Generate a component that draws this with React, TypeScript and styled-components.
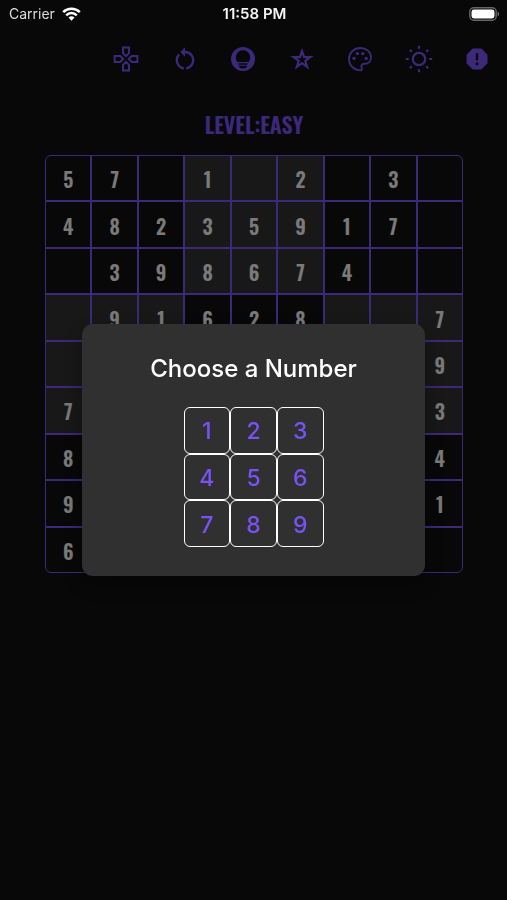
import React from "react";
import styled, { createGlobalStyle } from "styled-components";
import { MdRestartAlt, MdReport } from "react-icons/md";

const accent = "#7852f4";

const GlobalStyle = createGlobalStyle`
  *, *::before, *::after { box-sizing: border-box; }
  html { background: #101010; }
  body {
    margin: 0;
    font-family: Inter, "Liberation Sans", sans-serif;
    color: #fff;
  }
  button { margin: 0; padding: 0; border: 0; background: none; font: inherit; color: inherit; cursor: pointer; }
`;

const Screen = styled.div`
  min-height: 100vh;
  display: flex;
  flex-direction: column;
  background: #101010;
`;

const StatusBar = styled.header`
  position: relative;
  z-index: 3;
  display: grid;
  grid-template-columns: 1fr auto 1fr;
  align-items: center;
  height: 28px;
  padding: 0 7px 0 9px;
  font-size: 14px;
  line-height: 20px;
`;

const Carrier = styled.span`
  display: flex;
  align-items: center;
  gap: 7px;
  color: #dcdcdc;
`;

const Clock = styled.time`
  font-size: 15px;
  font-weight: 600;
  color: #f4f4f4;
`;

const Battery = styled.svg`
  justify-self: end;
  display: block;
`;

const Toolbar = styled.nav`
  display: flex;
  justify-content: space-between;
  padding: 17px 16px 0 112px;
`;

const Tool = styled.button`
  display: grid;
  place-items: center;
  width: 28px;
  height: 28px;
  color: ${accent};

  svg { display: block; }
`;

const Game = styled.main`
  display: flex;
  flex-direction: column;
  gap: 16px;
  padding: 36px 44px 0 45px;
`;

const Level = styled.h1`
  margin: 0;
  text-align: center;
  font-family: Oswald, "Liberation Sans Narrow", "Liberation Sans", sans-serif;
  font-size: 22px;
  line-height: 30px;
  font-weight: 600;
  color: ${accent};
`;

const Board = styled.div`
  display: grid;
  grid-template-columns: repeat(9, 1fr);

  & > :nth-child(1) { border-top-left-radius: 6px; }
  & > :nth-child(9) { border-top-right-radius: 6px; }
  & > :nth-child(73) { border-bottom-left-radius: 6px; }
  & > :nth-child(81) { border-bottom-right-radius: 6px; }
`;

const Cell = styled.button<{ $tinted: boolean }>`
  aspect-ratio: 1;
  min-width: 0;
  display: grid;
  place-items: center;
  padding-top: 2px;
  border: 1px solid ${accent};
  background: ${(p) => (p.$tinted ? "#303030" : "#101010")};
  font-family: Oswald, "Liberation Sans Narrow", "Liberation Sans", sans-serif;
  font-size: 20px;
  line-height: 28px;
  font-weight: 600;
  color: #f4f4f4;
`;

const Backdrop = styled.div`
  position: fixed;
  inset: 0;
  z-index: 2;
  display: grid;
  place-items: center;
  background: rgba(0, 0, 0, 0.5);
`;

const Dialog = styled.section`
  width: 67.5%;
  display: flex;
  flex-direction: column;
  align-items: center;
  gap: 22px;
  padding: 29px 20px;
  border-radius: 11px;
  background: #303030;
  box-shadow: 0 8px 20px rgba(0, 0, 0, 0.35);
`;

const DialogTitle = styled.h2`
  margin: 0;
  font-size: 24px;
  line-height: 32px;
  font-weight: 500;
  text-align: center;
`;

const Picker = styled.div`
  display: grid;
  grid-template-columns: repeat(3, 1fr);
  width: 140px;
`;

const PickerKey = styled.button`
  aspect-ratio: 1;
  display: grid;
  place-items: center;
  padding-top: 2px;
  border: 1px solid #fff;
  border-radius: 6px;
  font-size: 23px;
  line-height: 28px;
  font-weight: 500;
  color: ${accent};
`;

const GamepadIcon = () => (
  <svg width="26" height="26" viewBox="0 0 26 26" fill="none" stroke="currentColor" strokeWidth="2" aria-hidden="true">
    <path d="M10 1.600h6v5.600l-3 3-3-3zM10 24.400h6v-5.600l-3-3-3 3zM1.600 10v6h5.600l3-3-3-3zM24.400 10v6h-5.600l-3-3 3-3z" />
  </svg>
);

const BulbIcon = () => (
  <svg width="26" height="26" viewBox="0 0 26 26" aria-hidden="true">
    <path
      fill="currentColor"
      fillRule="evenodd"
      d="M13 1a12 12 0 1 0 0 24a12 12 0 0 0 0-24zM13 4.200a7.200 7.200 0 0 1 4.600 12.700L17.200 20a4.300 3.200 0 0 1-8.400 0l-.4-3.100A7.200 7.200 0 0 1 13 4.200z"
    />
    <path d="M8 16.600h10M8.500 19.200h9" stroke="currentColor" strokeWidth="1.1" />
  </svg>
);

const StarIcon = () => (
  <svg width="26" height="26" viewBox="0 0 26 26" fill="none" stroke="currentColor" strokeWidth="2.2" aria-hidden="true">
    <path d="M13 5.200l2.100 5.900h6.200l-5 3.700 1.900 6.200-5.200-3.800L7.800 21l1.900-6.200-5-3.700h6.200z" />
  </svg>
);

const PaletteIcon = () => (
  <svg width="26" height="26" viewBox="0 0 26 26" fill="none" stroke="currentColor" strokeWidth="1.9" aria-hidden="true">
    <path d="M14.600 24.200C7.400 24.800 2 19.600 2 13 2 6.700 7 2 13.200 2 19.400 2 24 6 24 11.200c0 4-2.700 6.600-6 6.600-2.200 0-3.600.5-3.600 2.300 0 1.700 1.200 2.400.2 4.100z" />
    <g fill="currentColor" stroke="none">
      <circle cx="7" cy="12.4" r="1.7" />
      <circle cx="10.4" cy="7.6" r="1.7" />
      <circle cx="15.8" cy="7.6" r="1.7" />
      <circle cx="19.2" cy="12.4" r="1.7" />
    </g>
  </svg>
);

const SunIcon = () => (
  <svg width="28" height="28" viewBox="0 0 28 28" fill="none" stroke="currentColor" strokeWidth="2.2" aria-hidden="true">
    <circle cx="14" cy="14" r="6.2" />
    <path d="M14 .8v3M14 24.2v3M.8 14h3M24.2 14h3M4.9 4.9l1.9 1.9M21.2 21.2l1.9 1.9M4.9 23.1l1.9-1.9M21.2 6.8l1.9-1.9" />
  </svg>
);

const WifiIcon = () => (
  <svg width="19" height="14" viewBox="0 0 19 14" fill="none" stroke="#fff" strokeWidth="2.5" aria-hidden="true">
    <path d="M1.2 5.2a11.8 11.8 0 0 1 16.6 0M4.2 8.3a7.5 7.5 0 0 1 10.6 0" />
    <path d="M9.5 13.8l-3-3.2a4.3 4.3 0 0 1 6 0z" fill="#fff" stroke="none" />
  </svg>
);

const tools = [
  { label: "Controls", icon: <GamepadIcon /> },
  { label: "Restart", icon: <MdRestartAlt size={28} /> },
  { label: "Hint", icon: <BulbIcon /> },
  { label: "Favourites", icon: <StarIcon /> },
  { label: "Theme", icon: <PaletteIcon /> },
  { label: "Brightness", icon: <SunIcon /> },
  { label: "Report", icon: <MdReport size={28} /> },
];

const rows = [
  "57.1.2.3.",
  "48235917.",
  ".398674..",
  ".91628..7",
  "........9",
  "7.......3",
  "8.......4",
  "9.......1",
  "6........",
];

const isTinted = (row: number, col: number) =>
  (Math.floor(row / 3) + Math.floor(col / 3)) % 2 === 1;

export default function App() {
  return (
    <>
      <GlobalStyle />
      <Screen>
        <StatusBar>
          <Carrier>
            Carrier
            <WifiIcon />
          </Carrier>
          <Clock>11:58 PM</Clock>
          <Battery width="31" height="14" viewBox="0 0 31 14" aria-hidden="true">
            <rect x="0.8" y="0.8" width="26.4" height="12.4" rx="4" fill="none" stroke="#666" strokeWidth="1.4" />
            <rect x="2.5" y="2.5" width="23" height="9" rx="2.4" fill="#fff" />
            <path d="M28.6 4.6c1.9.7 1.9 4.1 0 4.8z" fill="#777" />
          </Battery>
        </StatusBar>
        <Toolbar>
          {tools.map((tool) => (
            <Tool key={tool.label} type="button" aria-label={tool.label}>
              {tool.icon}
            </Tool>
          ))}
        </Toolbar>
        <Game>
          <Level>LEVEL:EASY</Level>
          <Board>
            {rows.flatMap((row, r) =>
              [...row].map((digit, c) => (
                <Cell
                  key={`${r}-${c}`}
                  type="button"
                  $tinted={isTinted(r, c)}
                  aria-label={`Row ${r + 1}, column ${c + 1}`}
                >
                  {digit === "." ? "" : digit}
                </Cell>
              ))
            )}
          </Board>
        </Game>
      </Screen>
      <Backdrop>
        <Dialog role="dialog" aria-modal="true" aria-labelledby="picker-title">
          <DialogTitle id="picker-title">Choose a Number</DialogTitle>
          <Picker>
            {[1, 2, 3, 4, 5, 6, 7, 8, 9].map((n) => (
              <PickerKey key={n} type="button">
                {n}
              </PickerKey>
            ))}
          </Picker>
        </Dialog>
      </Backdrop>
    </>
  );
}
